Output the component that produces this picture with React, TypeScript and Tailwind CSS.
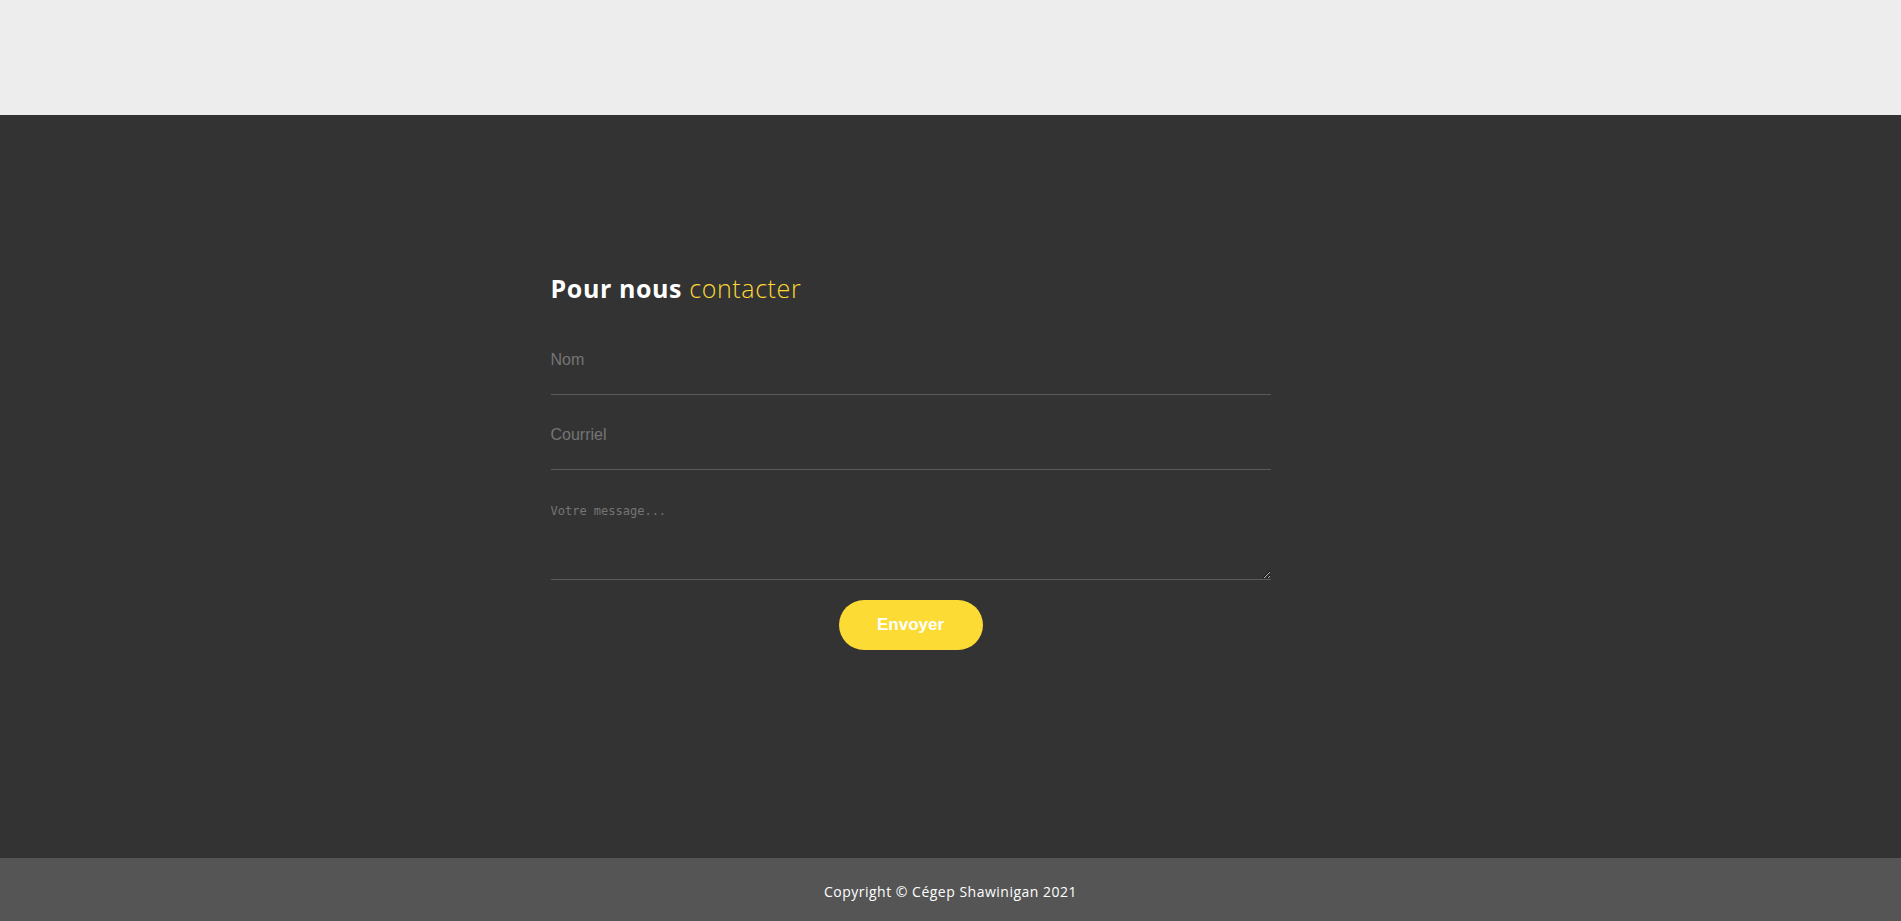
import React from "react";

export default function App() {
  return (
    <div className="min-h-[921px] flex flex-col bg-[#333333]" style={{ fontFamily: '"Open Sans", Arial, sans-serif' }}>
      <div className="h-[115px] bg-[#ededed] shrink-0" />
      <section className="flex-1 bg-[#333333]">
        <div className="w-[800px] mx-auto pt-[159px]">
          <div className="w-[720px]">
            <h2 className="text-[25px] leading-[29px] tracking-[0.6px] text-white font-['Open_Sans',sans-serif]">
              <span className="font-bold">Pour nous</span>{" "}
              <span className="font-light text-[#fdd835]">contacter</span>
            </h2>
            <form className="flex flex-col mt-[37px]" onSubmit={(e) => e.preventDefault()}>
              <input
                type="text"
                placeholder="Nom"
                className="box-border h-[55px] pb-[14px] w-full bg-transparent border-0 border-b border-[#5a5a5a] outline-none text-[16px] text-white placeholder:text-[#757575] font-['Liberation_Sans',Arial,sans-serif]"
              />
              <input
                type="email"
                placeholder="Courriel"
                className="mt-[20px] box-border h-[55px] pb-[14px] w-full bg-transparent border-0 border-b border-[#5a5a5a] outline-none text-[16px] text-white placeholder:text-[#757575] font-['Liberation_Sans',Arial,sans-serif]"
              />
              <textarea
                placeholder="Votre message..."
                className="mt-[20px] box-border h-[90px] pt-[12px] w-full bg-transparent border-0 border-b border-[#5a5a5a] outline-none text-[12px] text-white placeholder:text-[#757575] font-['DejaVu_Sans_Mono',monospace]"
              />
              <div className="flex justify-center mt-[20px]">
                <button
                  type="submit"
                  className="w-[144px] h-[50px] rounded-full bg-[#fddb35] text-white font-bold text-[17px] font-['Liberation_Sans',Arial,sans-serif]"
                >
                  Envoyer
                </button>
              </div>
            </form>
          </div>
        </div>
      </section>
      <footer className="h-[63px] shrink-0 bg-[#555555] flex items-center justify-center">
        <p className="text-white text-[14px] tracking-[0.5px] pt-[3px] font-['Open_Sans',sans-serif]">Copyright © Cégep Shawinigan 2021</p>
      </footer>
    </div>
  );
}
